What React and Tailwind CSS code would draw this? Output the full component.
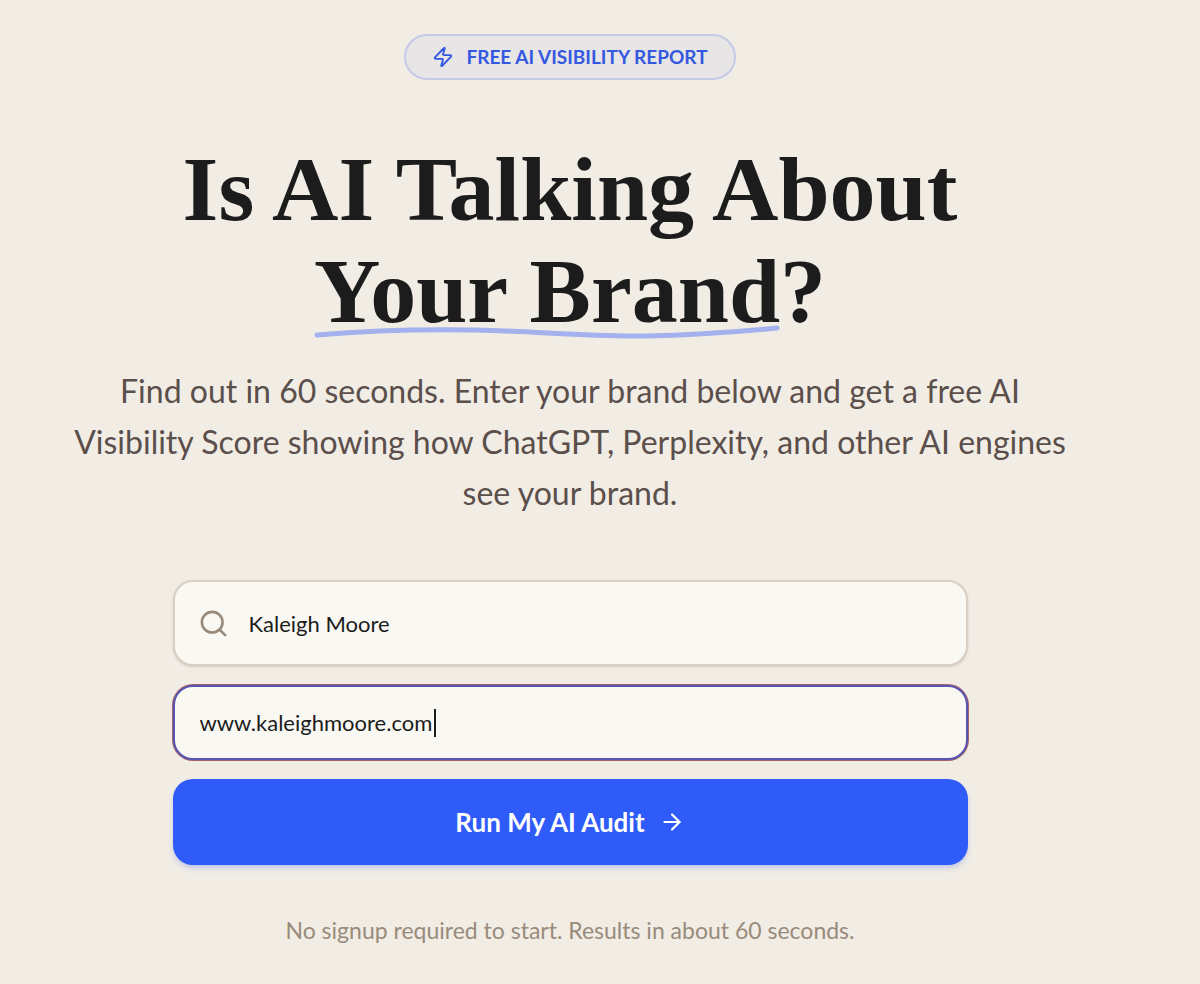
import { useState } from "react";
import { ArrowRight, Search, Zap } from "lucide-react";

export default function App() {
  const [brand, setBrand] = useState("Kaleigh Moore");
  const [website, setWebsite] = useState("www.kaleighmoore.com");

  return (
    <main className="min-h-screen bg-[#f1ece4] pt-[34px] pr-[60px] pb-10 font-['Lato',sans-serif]">
      <section className="mx-auto flex max-w-[1024px] flex-col items-center text-center">
        {/* Badge */}
        <div className="flex h-[46px] items-center gap-3 rounded-full border-2 border-[#c5c9e8] bg-[#e7e5e6] px-[26px] text-[19px] font-bold text-[#3558e0]">
          <Zap className="size-[22px]" strokeWidth={2} />
          <span>FREE AI VISIBILITY REPORT</span>
        </div>

        {/* Heading */}
        <h1 className="mt-[58px] font-['Liberation_Serif',serif] text-[92px] leading-[102px] font-bold text-[#1c1c1c]">
          Is AI Talking About
          <br />
          <span className="relative inline-block">
            Your Brand
            <svg
              className="absolute bottom-0.5 left-0 h-4 w-full"
              viewBox="0 0 464 16"
              preserveAspectRatio="none"
              fill="none"
            >
              <path
                d="M3 11C60 6 110 5 160 6C220 7 270 13 330 12C380 11 420 8 461 4"
                stroke="#a3b1ee"
                strokeWidth="5"
                strokeLinecap="round"
              />
            </svg>
          </span>
          ?
        </h1>

        <p className="mt-[23px] text-[32px] leading-[51px] text-[#5b4f4b]">
          Find out in 60 seconds. Enter your brand below and get a free AI
          Visibility Score showing how ChatGPT, Perplexity, and other AI engines
          see your brand.
        </p>

        {/* Audit form */}
        <form
          className="mt-[62px] flex w-full max-w-[795px] flex-col gap-[19px]"
          onSubmit={(e) => e.preventDefault()}
        >
          <div className="relative">
            <Search
              className="absolute top-7 left-[25px] size-[31px] text-[#998b7b]"
              strokeWidth={2}
            />
            <input
              type="text"
              aria-label="Brand name"
              value={brand}
              onChange={(e) => setBrand(e.target.value)}
              className="h-[86px] w-full rounded-[20px] border-2 border-[#d9cfc4] bg-[#f9f8f3] pr-6 pl-[74px] text-[22px] text-[#1c1c1c] shadow-sm outline-none"
            />
          </div>
          <div className="relative">
            <input
              type="text"
              aria-label="Website"
              autoFocus
              value={website}
              onChange={(e) => setWebsite(e.target.value)}
              className="h-[75px] w-full rounded-[20px] border-2 border-[#5a55b0] bg-[#f9f8f3] px-[25px] text-[22px] text-[#1c1c1c] caret-transparent ring-1 ring-[#a2646c] outline-none"
            />
            {/* Text cursor */}
            <span className="absolute top-6 left-[261px] h-7 w-0.5 bg-[#1c1c1c]" />
          </div>
          <button
            type="submit"
            className="flex h-[86px] w-full items-center justify-center gap-3.5 rounded-[20px] bg-[#2f5cf8] text-[26px] font-bold text-white shadow-md shadow-[#2f5cf8]/20"
          >
            Run My AI Audit
            <ArrowRight className="size-[26px]" strokeWidth={2} />
          </button>
        </form>

        <p className="mt-[49px] text-[23px] leading-8 text-[#998b7b]">
          No signup required to start. Results in about 60 seconds.
        </p>
      </section>
    </main>
  );
}
